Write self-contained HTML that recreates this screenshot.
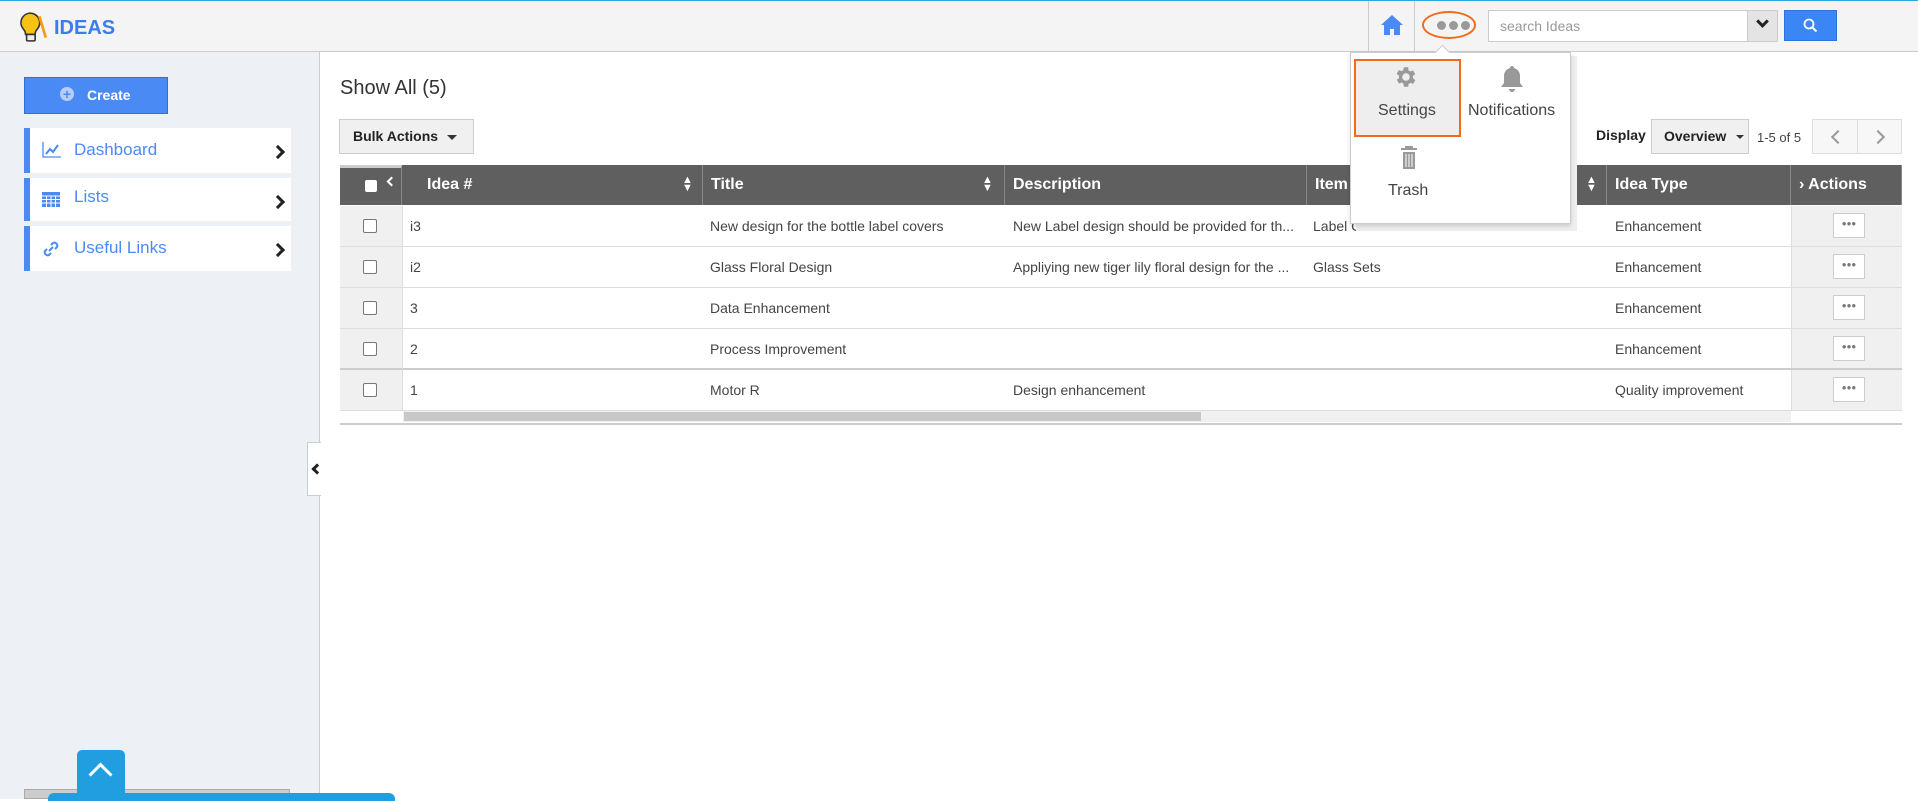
<!DOCTYPE html>
<html><head><meta charset="utf-8"><style>
*{box-sizing:border-box;margin:0;padding:0}
body{width:1918px;height:799px;overflow:hidden;font-family:"Liberation Sans",Arial,sans-serif;background:#fff;position:relative;color:#333}
.a{position:absolute}
.hdr{left:0;top:0;width:1918px;height:52px;background:#f4f4f4;border-top:1px solid #29abe2;border-bottom:1px solid #ccc}
.side{left:0;top:52px;width:320px;height:747px;background:#edf0f5;border-right:1px solid #ccc}
.nav{left:24px;width:267px;background:#fff;border-left:6px solid #4a8af4;color:#4a8af4;font-size:17px}
.nav span{position:absolute;left:44px;top:12px}
.nav .chev{position:absolute;right:8px;top:19px;width:10px;height:10px;border-right:3px solid #222;border-top:3px solid #222;transform:rotate(45deg)}
.th{top:165px;height:40px;background:#5f5f5f;color:#fff;font-weight:bold;font-size:16px;line-height:40px;border-right:1px solid #888}
.row{left:340px;width:1562px;height:41px;border-bottom:1px solid #ddd;font-size:14px;color:#444}
.cell{position:absolute;top:0;line-height:40px;white-space:nowrap}
.cb{position:absolute;left:23px;top:13px;width:14px;height:14px;border:1px solid #777;border-radius:2px;background:#fff}
.dotbtn{position:absolute;left:1833px;width:32px;height:25px;border:1px solid #ccc;background:#fff;font-size:8px;color:#777;text-align:center;line-height:20px}
</style></head><body>
<div class="a hdr"></div>
<svg class="a" style="left:18px;top:11px" width="30" height="32" viewBox="0 0 28 30"><path d="M11 2a9 9 0 0 0-6 15c2 2 2 4 2 5h9c0-1 0-3 2-5a9 9 0 0 0-7-15z" fill="#f6c315" stroke="#333" stroke-width="1.5"/><rect x="8" y="22" width="8" height="6" rx="1" fill="#eee" stroke="#333" stroke-width="1.5"/><path d="M20 5l6 20" stroke="#f39c12" stroke-width="2.5"/></svg>
<div class="a" style="left:54px;top:17px;font-size:20px;font-weight:bold;color:#3b7de9">IDEAS</div>
<div class="a" style="left:1368px;top:1px;width:47px;height:51px;border-left:1px solid #ccc;border-right:1px solid #ccc"></div>
<svg class="a" style="left:1380px;top:13px" width="24" height="24" viewBox="0 0 24 24"><path d="M12 2L1 12h3v10h6v-6h4v6h6V12h3z" fill="#4a8af4"/></svg>
<div class="a" style="left:1422px;top:11px;width:54px;height:28px;border:2.5px solid #f26a1b;border-radius:50%"></div>
<div class="a" style="left:1437px;top:21px;width:9px;height:9px;border-radius:50%;background:#999"></div>
<div class="a" style="left:1449px;top:21px;width:9px;height:9px;border-radius:50%;background:#999"></div>
<div class="a" style="left:1461px;top:21px;width:9px;height:9px;border-radius:50%;background:#999"></div>
<div class="a" style="left:1488px;top:10px;width:260px;height:32px;border:1px solid #ccc;background:#fff;font-size:14px;color:#999;padding:7px 11px">search Ideas</div>
<div class="a" style="left:1748px;top:10px;width:30px;height:32px;border:1px solid #ccc;border-left:none;background:#e4e4e4"></div>
<div class="a" style="left:1758px;top:17px;width:9px;height:9px;border-right:3px solid #222;border-bottom:3px solid #222;transform:rotate(45deg)"></div>
<div class="a" style="left:1784px;top:10px;width:53px;height:31px;background:#3b86f5;border:1px solid #2c73e0"></div>
<svg class="a" style="left:1803px;top:18px" width="15" height="15" viewBox="0 0 15 15"><circle cx="6" cy="6" r="4.5" fill="none" stroke="#fff" stroke-width="1.8"/><path d="M9.5 9.5l4 4" stroke="#fff" stroke-width="2"/></svg>

<div class="a side"></div>
<div class="a" style="left:24px;top:77px;width:144px;height:37px;background:#4a8af4;border:1px solid #2f6fd8;color:#fff;font-weight:bold;font-size:14px;line-height:35px;padding-left:62px">Create</div>
<div class="a" style="left:60px;top:87px;width:14px;height:14px;border-radius:50%;background:#b8cdf3;color:#4a8af4;font-size:14px;line-height:14px;text-align:center;font-weight:bold">+</div>
<div class="a nav" style="top:128px;height:45px"><svg class="a" style="left:12px;top:14px" width="20" height="16" viewBox="0 0 20 16"><path d="M1 0v15h18" stroke="#4a8af4" fill="none" stroke-width="1.3"/><path d="M4 12l4-5 3 3 5-7" stroke="#4a8af4" fill="none" stroke-width="2"/></svg><span>Dashboard</span><i class="chev"></i></div>
<div class="a nav" style="top:178px;height:43px"><svg class="a" style="left:12px;top:14px" width="18" height="15" viewBox="0 0 18 15"><rect width="18" height="15" fill="#4a8af4"/><path d="M0 4h18M0 7.5h18M0 11h18M4.5 4v11M9 4v11M13.5 4v11" stroke="#fff"/></svg><span style="top:9px">Lists</span><i class="chev"></i></div>
<div class="a nav" style="top:226px;height:45px"><svg class="a" style="left:12px;top:14px" width="18" height="18" viewBox="0 0 18 18"><path d="M7 11l4-4M5 9l-2 2a3 3 0 0 0 4 4l2-2M13 9l2-2a3 3 0 0 0-4-4l-2 2" stroke="#4a8af4" stroke-width="2" fill="none"/></svg><span>Useful Links</span><i class="chev"></i></div>
<div class="a" style="left:307px;top:442px;width:14px;height:54px;background:#fff;border:1px solid #ccc;border-right:none"></div>
<div class="a" style="left:313px;top:465px;width:8px;height:8px;border-left:3px solid #222;border-bottom:3px solid #222;transform:rotate(45deg)"></div>
<div class="a" style="left:24px;top:789px;width:266px;height:10px;background:#ccc;border:1px solid #aaa"></div>
<div class="a" style="left:77px;top:750px;width:48px;height:49px;background:#209ee0;border-radius:5px 5px 0 0"></div>
<div class="a" style="left:92px;top:766px;width:17px;height:17px;border-left:3px solid #fff;border-top:3px solid #fff;transform:rotate(45deg)"></div>
<div class="a" style="left:48px;top:793px;width:347px;height:8px;background:#209ee0;border-radius:6px 6px 0 0"></div>

<div class="a" style="left:340px;top:77px;font-size:20px;color:#333">Show All (5)</div>
<div class="a" style="left:339px;top:119px;width:135px;height:35px;background:#f0f0f0;border:1px solid #ccc;font-weight:bold;font-size:14px;line-height:33px;padding-left:13px;color:#222">Bulk Actions</div>
<div class="a" style="left:447px;top:135px;border:5px solid transparent;border-top-color:#333"></div>
<div class="a" style="left:1596px;top:127px;font-weight:bold;font-size:14px;color:#222">Display</div>
<div class="a" style="left:1651px;top:119px;width:98px;height:35px;background:#f0f0f0;border:1px solid #ccc;font-weight:bold;font-size:14px;line-height:33px;padding-left:12px;color:#222">Overview</div>
<div class="a" style="left:1736px;top:135px;border:4px solid transparent;border-top-color:#333"></div>
<div class="a" style="left:1757px;top:130px;font-size:13px;color:#444">1-5 of 5</div>
<div class="a" style="left:1812px;top:119px;width:90px;height:35px;border:1px solid #ddd;background:#f7f7f7"></div>
<div class="a" style="left:1857px;top:119px;width:1px;height:35px;background:#ddd"></div>
<div class="a" style="left:1833px;top:132px;width:10px;height:10px;border-left:2px solid #999;border-bottom:2px solid #999;transform:rotate(45deg)"></div>
<div class="a" style="left:1873px;top:132px;width:10px;height:10px;border-right:2px solid #999;border-top:2px solid #999;transform:rotate(45deg)"></div>

<div class="a th" style="left:340px;width:62px;border-top:3px solid #ccc;line-height:34px"></div>
<div class="a" style="left:365px;top:180px;width:12px;height:12px;background:#fff;border-radius:2px"></div>
<div class="a" style="left:388px;top:178px;width:7px;height:7px;border-left:2px solid #fff;border-bottom:2px solid #fff;transform:rotate(45deg)"></div>
<div class="a th" style="left:402px;width:301px;padding-left:25px">Idea #</div>
<div class="a th" style="left:703px;width:302px;padding-left:8px">Title</div>
<div class="a th" style="left:1005px;width:302px;padding-left:8px">Description</div>
<div class="a th" style="left:1307px;width:300px;padding-left:8px">Item</div>
<div class="a th" style="left:1607px;width:184px;padding-left:8px">Idea Type</div>
<div class="a th" style="left:1791px;width:111px;padding-left:8px">› Actions</div>
<div class="a" style="left:682px;top:176px;color:#fff;font-size:11px;line-height:8px">▲<br>▼</div>
<div class="a" style="left:982px;top:176px;color:#fff;font-size:11px;line-height:8px">▲<br>▼</div>
<div class="a" style="left:1586px;top:176px;color:#fff;font-size:11px;line-height:8px">▲<br>▼</div>

<div class="a" style="left:340px;top:206px;width:62px;height:205px;background:#f0f0f0"></div>
<div class="a" style="left:1791px;top:206px;width:111px;height:205px;background:#f0f0f0;border-left:1px solid #ddd"></div>

<div class="a row" style="top:206px"><i class="cb"></i><div class="cell" style="left:70px">i3</div><div class="cell" style="left:370px">New design for the bottle label covers</div><div class="cell" style="left:673px">New Label design should be provided for th...</div><div class="cell" style="left:973px">Label Covers</div><div class="cell" style="left:1275px">Enhancement</div></div>
<div class="a row" style="top:247px"><i class="cb"></i><div class="cell" style="left:70px">i2</div><div class="cell" style="left:370px">Glass Floral Design</div><div class="cell" style="left:673px">Appliying new tiger lily floral design for the ...</div><div class="cell" style="left:973px">Glass Sets</div><div class="cell" style="left:1275px">Enhancement</div></div>
<div class="a row" style="top:288px"><i class="cb"></i><div class="cell" style="left:70px">3</div><div class="cell" style="left:370px">Data Enhancement</div><div class="cell" style="left:1275px">Enhancement</div></div>
<div class="a row" style="top:329px;border-bottom:2px solid #ccc"><i class="cb"></i><div class="cell" style="left:70px">2</div><div class="cell" style="left:370px">Process Improvement</div><div class="cell" style="left:1275px">Enhancement</div></div>
<div class="a row" style="top:370px"><i class="cb"></i><div class="cell" style="left:70px">1</div><div class="cell" style="left:370px">Motor R</div><div class="cell" style="left:673px">Design enhancement</div><div class="cell" style="left:1275px">Quality improvement</div></div>
<div class="a" style="left:402px;top:206px;width:1px;height:205px;background:#ddd"></div>
<div class="a dotbtn" style="top:213px">●●●</div>
<div class="a dotbtn" style="top:254px">●●●</div>
<div class="a dotbtn" style="top:295px">●●●</div>
<div class="a dotbtn" style="top:336px">●●●</div>
<div class="a dotbtn" style="top:377px">●●●</div>
<div class="a" style="left:403px;top:411px;width:1388px;height:11px;background:#f0f0f0"></div>
<div class="a" style="left:404px;top:412px;width:797px;height:9px;background:#c8c8c8"></div>
<div class="a" style="left:340px;top:423px;width:1562px;height:2px;background:#ccc"></div>

<div class="a" style="left:1356px;top:56px;width:221px;height:175px;background:#eee"></div>
<div class="a" style="left:1350px;top:52px;width:221px;height:172px;background:#fff;border:1px solid #ccc;box-shadow:0 2px 4px rgba(0,0,0,.15)"></div>
<div class="a" style="left:1437px;top:47px;width:11px;height:11px;background:#fff;border-left:1px solid #ccc;border-top:1px solid #ccc;transform:rotate(45deg)"></div>
<div class="a" style="left:1354px;top:59px;width:107px;height:78px;background:#eee;border:2.5px solid #f26a1b"></div>
<svg class="a" style="left:1393px;top:64px" width="26" height="26" viewBox="0 0 24 24"><path fill="#999" d="M19.4 13a7.5 7.5 0 0 0 0-2l2.1-1.6-2-3.5-2.5 1a7 7 0 0 0-1.7-1L15 3h-4l-.4 2.6a7 7 0 0 0-1.7 1l-2.5-1-2 3.5L6.6 11a7.5 7.5 0 0 0 0 2l-2.1 1.6 2 3.5 2.5-1a7 7 0 0 0 1.7 1L11 21h4l.4-2.6a7 7 0 0 0 1.7-1l2.5 1 2-3.5zM13 15.5a3.5 3.5 0 1 1 0-7 3.5 3.5 0 0 1 0 7z" transform="translate(-1 0)"/></svg>
<div class="a" style="left:1378px;top:102px;font-size:16px;color:#444">Settings</div>
<svg class="a" style="left:1499px;top:65px" width="26" height="29" viewBox="0 0 26 29"><path d="M13 1a2 2 0 0 1 2 2 8 8 0 0 1 6 8v7l3 4H2l3-4v-7a8 8 0 0 1 6-8 2 2 0 0 1 2-2zM10 24h6a3 3 0 0 1-6 0z" fill="#999"/></svg>
<div class="a" style="left:1468px;top:102px;font-size:16px;color:#444">Notifications</div>
<svg class="a" style="left:1400px;top:146px" width="18" height="24" viewBox="0 0 18 24"><path d="M1 3h16M6 3V1h6v2" stroke="#999" stroke-width="2" fill="none"/><rect x="3" y="6" width="12" height="17" fill="#999"/><path d="M6 8v13M9 8v13M12 8v13" stroke="#fff"/></svg>
<div class="a" style="left:1388px;top:182px;font-size:16px;color:#444">Trash</div>
</body></html>
